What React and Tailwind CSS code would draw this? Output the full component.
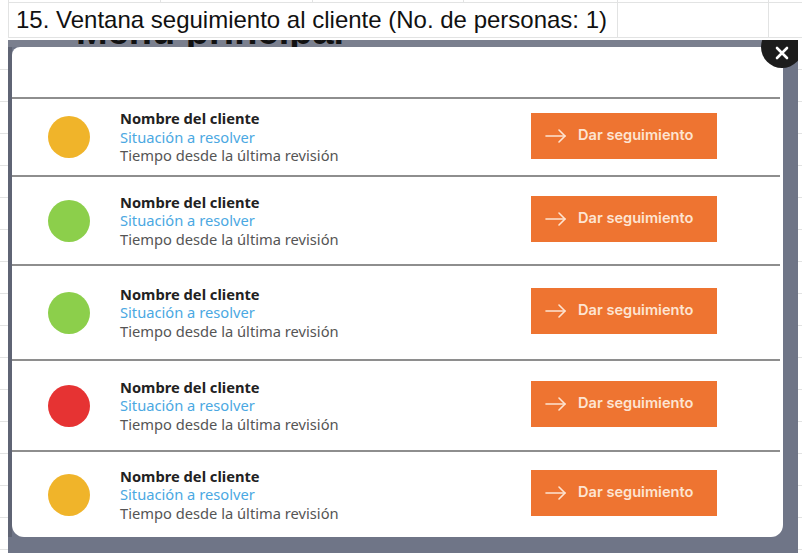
const clients = [
  { color: "bg-[#f0b42a]", h: "h-[78px]" },
  { color: "bg-[#8ccf4b]", h: "h-[89px]" },
  { color: "bg-[#8ccf4b]", h: "h-[95px]" },
  { color: "bg-[#e63333]", h: "h-[91px]" },
  { color: "bg-[#f0b42a]", h: "h-[87px]" },
];

function SheetRow() {
  return <div className="h-[32px] shrink-0 border-b border-[#e2e3e3]" />;
}

function ArrowRight() {
  return (
    <svg width="22" height="14" viewBox="0 0 22 14" fill="none" stroke="currentColor" strokeWidth="1.6" strokeLinecap="round" strokeLinejoin="round">
      <path d="M1 7h19" />
      <path d="M14 1l6 6-6 6" />
    </svg>
  );
}

function ClientRow({ color, h }) {
  return (
    <div className={`${h} mr-[3px] flex items-center border-t-2 border-[#8e8e8e]`}>
      <div className={`ml-[36px] h-[42px] w-[42px] shrink-0 rounded-full ${color}`} />
      <div className="ml-[30px] flex w-[411px] shrink-0 flex-col text-[14.7px] leading-[18.5px] font-['Noto_Sans',sans-serif]">
        <span className="font-bold text-[#222]">Nombre del cliente</span>
        <span className="text-[#4ba8e2]">Situación a resolver</span>
        <span className="text-[#555]">Tiempo desde la última revisión</span>
      </div>
      <button className="-mt-[3px] flex h-[46px] w-[186px] shrink-0 items-center bg-[#ee7431] pl-[14px] font-['Inter',sans-serif] text-[14.6px] font-semibold text-[#fde4d2]">
        <ArrowRight />
        <span className="ml-[11px]">Dar seguimiento</span>
      </button>
    </div>
  );
}

export default function App() {
  return (
    <div className="relative h-[553px] w-[802px] overflow-hidden bg-white font-['Liberation_Sans',Arial,sans-serif]">
      {/* spreadsheet grid */}
      <div className="ml-[8px] flex flex-col border-l border-[#e2e3e3]">
        <div className="flex h-[3px] border-b border-[#e2e3e3]">
          <div className="w-[152px] border-r border-[#e2e3e3]" />
          <div className="w-[152px] border-r border-[#e2e3e3]" />
          <div className="w-[151px] border-r border-[#e2e3e3]" />
          <div className="w-[154px] border-r border-[#e2e3e3]" />
          <div className="w-[151px] border-r border-[#e2e3e3]" />
        </div>
        <div className="flex h-[35px] border-b border-[#e2e3e3]">
          <div className="flex w-[609px] items-center whitespace-nowrap border-r border-[#e2e3e3] pl-[7px] text-[24px] text-[#111]">
            15. Ventana seguimiento al cliente (No. de personas: 1)
          </div>
          <div className="w-[151px] border-r border-[#e2e3e3]" />
        </div>
      </div>
      <div className="flex flex-col">
        {Array.from({ length: 16 }).map((_, i) => (
          <SheetRow key={i} />
        ))}
      </div>

      {/* embedded screenshot */}
      <div className="absolute left-[8px] top-[40px] h-[513px] w-[790px] overflow-hidden bg-[#6f7587] [clip-path:inset(0)]">
        <div className="relative h-[7px] overflow-hidden bg-[#7a7f8e] [clip-path:inset(0)]">
          <div className="absolute bottom-[-3px] left-[68px] whitespace-nowrap text-[38px] font-bold leading-none text-[#111]">
            Menú principal
          </div>
        </div>
        <div className="flex">
          <div className="w-[4px] bg-[#5f6474]" />
          <div className="flex h-[490px] w-[771px] flex-col rounded-b-[12px] rounded-tl-[8px] bg-white">
            <div className="h-[50px] shrink-0" />
            {clients.map((c, i) => (
              <ClientRow key={i} {...c} />
            ))}
          </div>
        </div>
        <button className="absolute left-[753px] top-[-14px] flex h-[42px] w-[42px] items-center justify-center rounded-full bg-[#1c1c1c]">
          <svg width="14" height="14" viewBox="0 0 14 14" stroke="white" strokeWidth="2.6" strokeLinecap="round" className="mt-[12px]">
            <path d="M2 2l10 10M12 2L2 12" />
          </svg>
        </button>
      </div>
    </div>
  );
}
